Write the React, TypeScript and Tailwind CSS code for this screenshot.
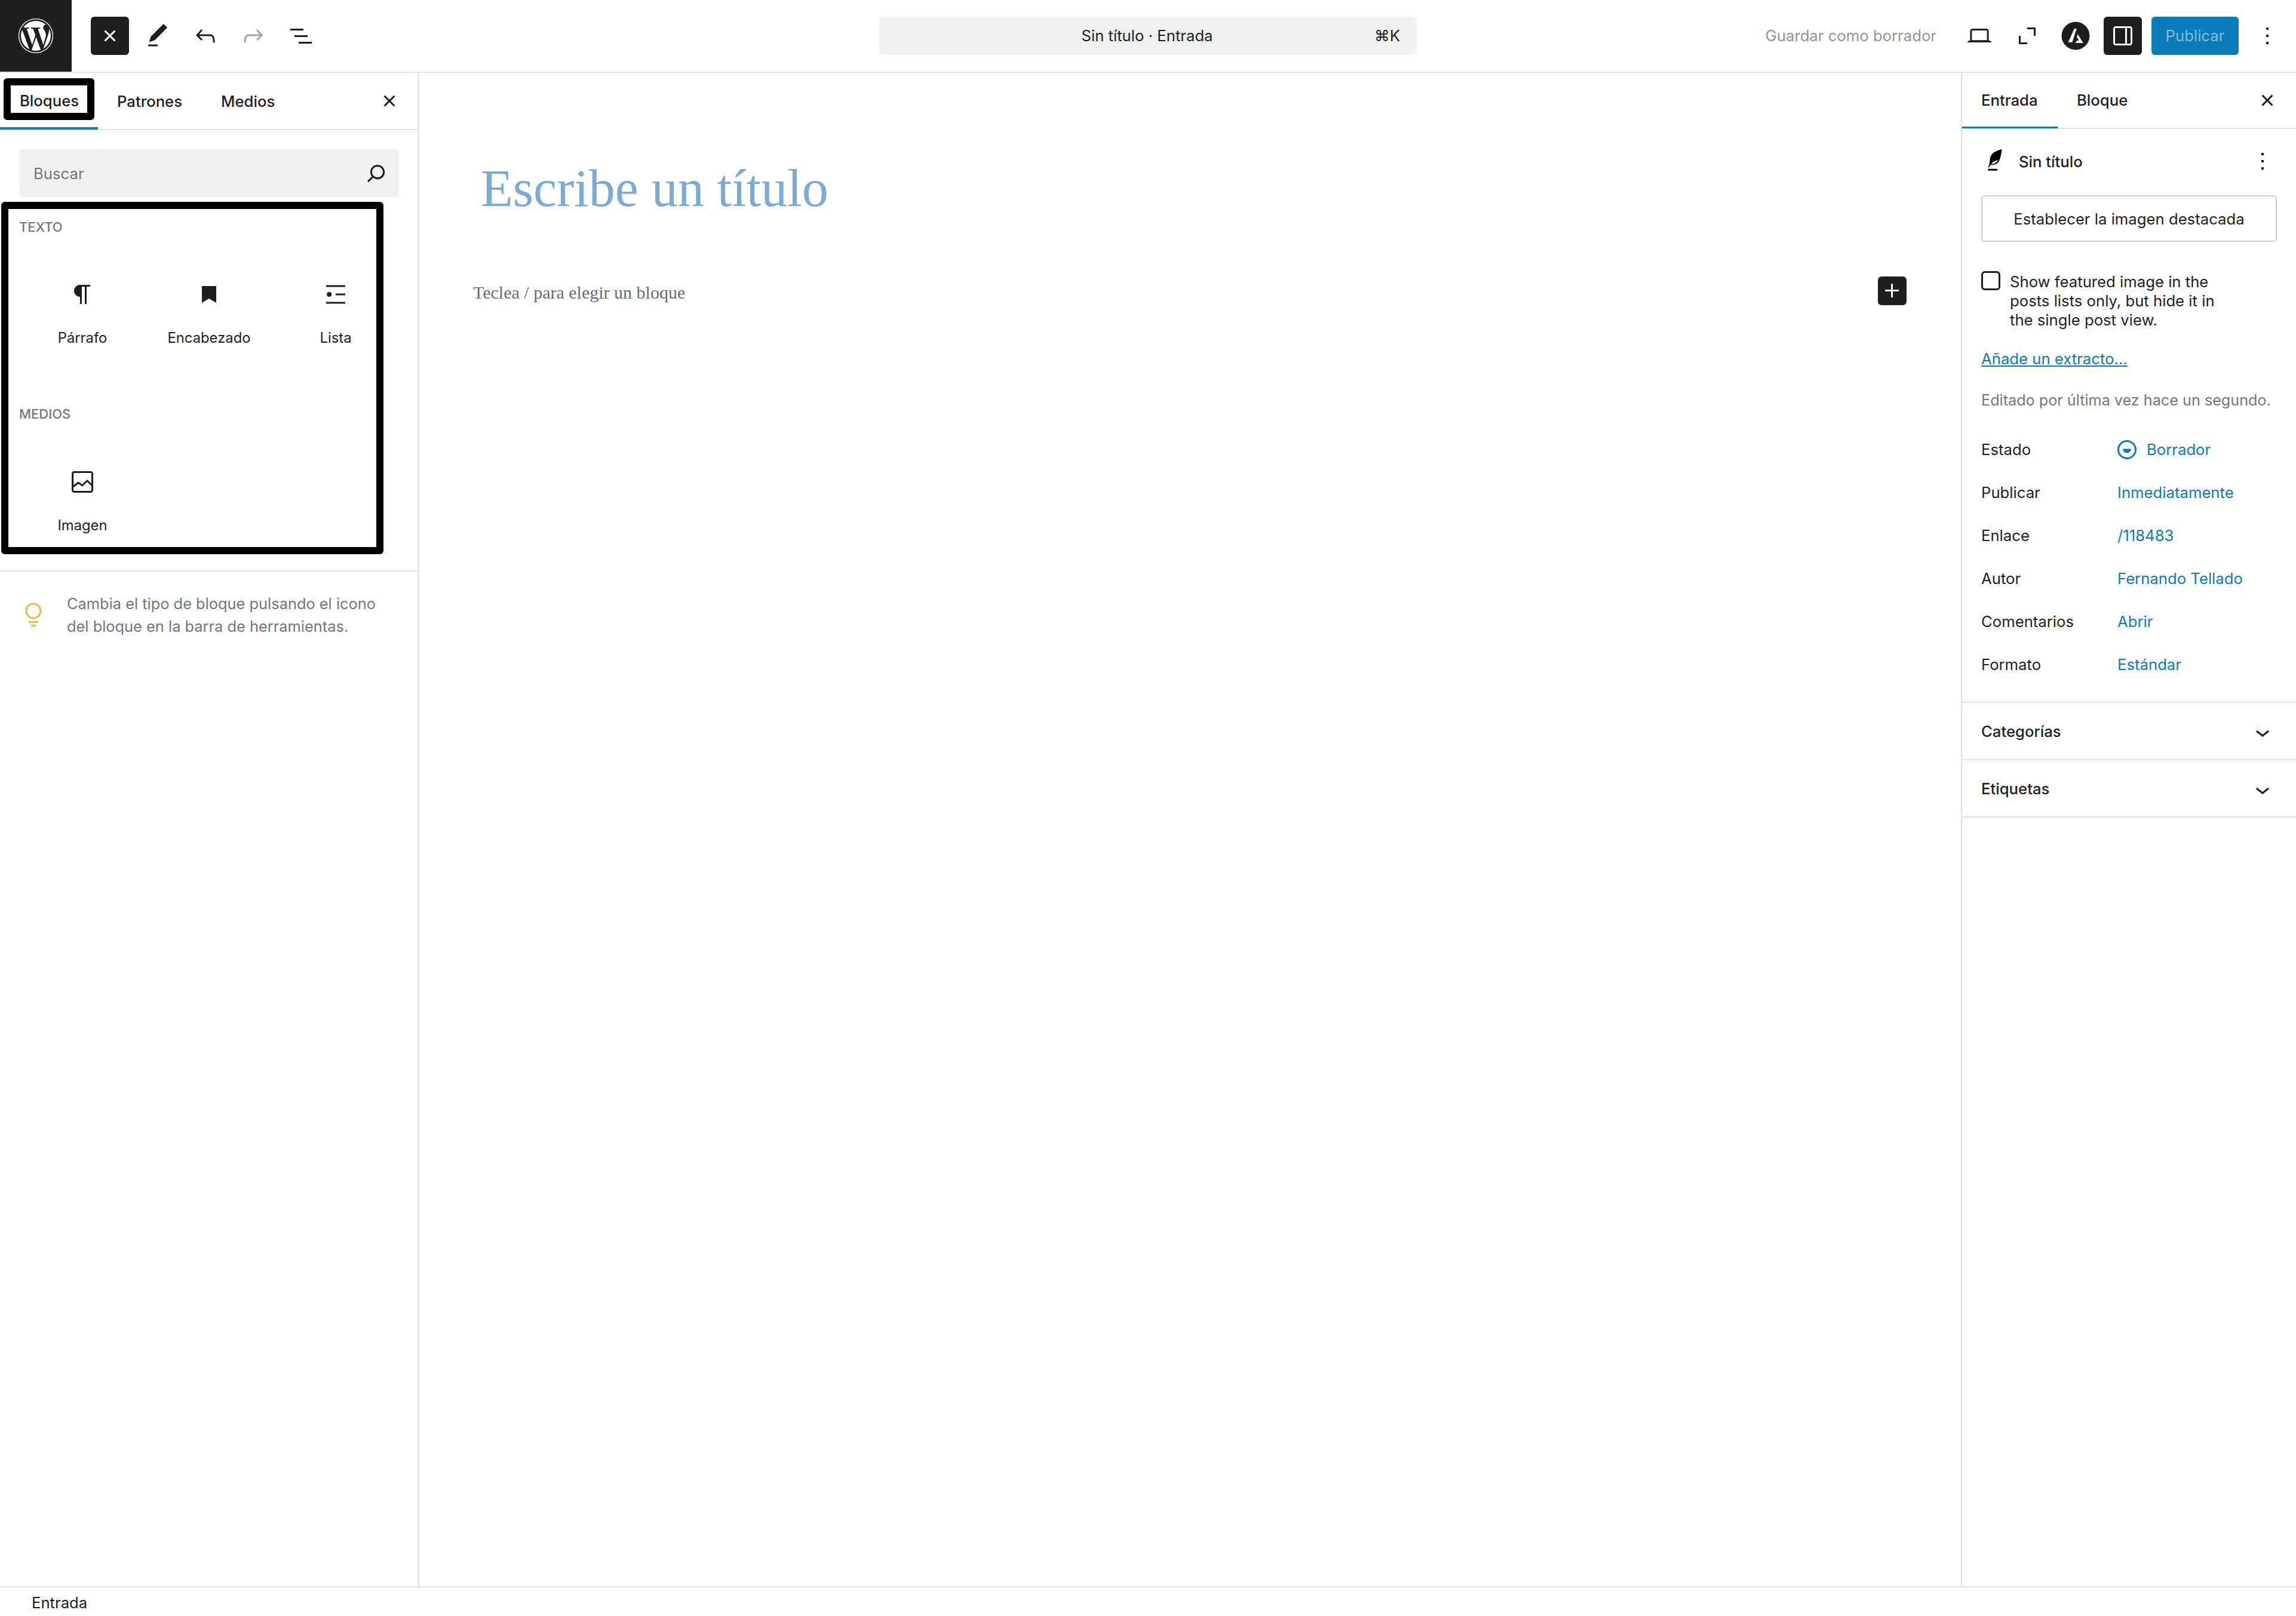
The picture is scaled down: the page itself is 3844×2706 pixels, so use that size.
import type { ReactNode } from 'react'
import { FaWordpress } from 'react-icons/fa'

function Icon({ d, className = 'w-12 h-12 fill-[#1e1e1e]' }: { d: string; className?: string }) {
  return (
    <svg viewBox="0 0 24 24" className={className} aria-hidden="true">
      <path d={d} />
    </svg>
  )
}

const icons = {
  closeSmall: 'M12 13.06l3.712 3.713 1.061-1.06L13.061 12l3.712-3.712-1.06-1.06L12 10.938 8.288 7.227l-1.061 1.06L10.939 12l-3.712 3.712 1.06 1.061L12 13.061z',
  pencil: 'M20.1 5.1L16.9 2 6.2 12.7l-1.3 4.4 4.5-1.3L20.1 5.1zM4 20.8h8v-1.5H4v1.5z',
  undo: 'M18.3 11.7c-.6-.6-1.4-.9-2.3-.9H6.7l2.9-3.3-1.1-1-4.5 5L8.5 16l1-1-2.7-2.7H16c.5 0 .9.2 1.3.5 1 1 1 3.4 1 4.5v.3h1.5v-.2c0-1.5 0-4.3-1.5-5.7z',
  redo: 'M15.6 6.5l-1.1 1 2.9 3.3H8c-.9 0-1.7.3-2.3.9-1.4 1.5-1.4 4.2-1.4 5.6v.2h1.5v-.3c0-1.1 0-3.5 1-4.5.3-.3.7-.5 1.3-.5h9.2L14.5 15l1.1 1.1 4.6-4.6-4.6-5z',
  listView: 'M3 6h11v1.5H3V6Zm3.5 5.5h11V13h-11v-1.5ZM21 17H10v1.5h11V17Z',
  search: 'M13 5c-3.3 0-6 2.7-6 6 0 1.4.5 2.7 1.3 3.7l-3.8 3.8 1.1 1.1 3.8-3.8c1 .8 2.3 1.3 3.7 1.3 3.3 0 6-2.7 6-6S16.3 5 13 5zm0 10.5c-2.5 0-4.5-2-4.5-4.5s2-4.5 4.5-4.5 4.5 2 4.5 4.5-2 4.5-4.5 4.5z',
  paragraph: 'm9.99609 14v-.2251l.00391.0001v6.225h1.5v-14.5h2.5v14.5h1.5v-14.5h3v-1.5h-8.50391c-2.76142 0-5 2.23858-5 5 0 2.7614 2.23858 5 5 5z',
  bookmark: 'M6 5h12v14l-6-3.5L6 19z',
  list: 'M4 4.2h16v1.5H4zM4 18.3h16v1.5H4zM12 11.3h8v1.5h-8zM8.6 12a2 2 0 1 1-4 0 2 2 0 0 1 4 0z',
  image: 'M19 3H5c-1.1 0-2 .9-2 2v14c0 1.1.9 2 2 2h14c1.1 0 2-.9 2-2V5c0-1.1-.9-2-2-2zM5 4.5h14c.3 0 .5.2.5.5v8.4l-3-2.9c-.3-.3-.8-.3-1 0L11.9 14 9 12c-.3-.2-.6-.2-.8 0l-3.6 2.6V5c-.1-.3.1-.5.4-.5zm14 15H5c-.3 0-.5-.2-.5-.5v-2.4l4.1-3 3 1.9c.3.2.7.2.9-.1L16 12l3.5 3.4V19c0 .3-.2.5-.5.5z',
  tip: 'M12 15.8c-3.7 0-6.8-3-6.8-6.8s3-6.8 6.8-6.8c3.7 0 6.8 3 6.8 6.8s-3.1 6.8-6.8 6.8zm0-12C9.1 3.8 6.8 6.1 6.8 9s2.4 5.2 5.2 5.2c2.9 0 5.2-2.4 5.2-5.2S14.9 3.8 12 3.8zM8 17.5h8V19H8zM10 20.5h4V22h-4z',
  desktop: 'M20.5 16h-.7V8c0-1.1-.9-2-2-2H6.2c-1.1 0-2 .9-2 2v8h-.7c-.8 0-1.5.7-1.5 1.5h20c0-.8-.7-1.5-1.5-1.5zM5.7 8c0-.3.2-.5.5-.5h11.6c.3 0 .5.2.5.5v7.6H5.7V8z',
  fullscreen: 'M5 12h1.5v5.5H12V19H5zM12 5h7v7h-1.5V6.5H12z',
  sidebar: 'M18 4H6c-1.1 0-2 .9-2 2v12c0 1.1.9 2 2 2h12c1.1 0 2-.9 2-2V6c0-1.1-.9-2-2-2zm-4 14.5H6c-.3 0-.5-.2-.5-.5V6c0-.3.2-.5.5-.5h8v13zm4.5-.5c0 .3-.2.5-.5.5h-2.5v-13H18c.3 0 .5.2.5.5v12z',
  more: 'M13 19h-2v-2h2v2zm0-6h-2v-2h2v2zm0-6h-2V5h2v2z',
  chevron: 'M17.5 11.6L12 16l-5.5-4.4.9-1.2L12 14l4.5-3.6 1 1.2z',
  plus: 'M11 12.5V17.5H12.5V12.5H17.5V11H12.5V6H11V11H6V12.5H11Z',
}

function BlockItem({ icon, label }: { icon: string; label: string }) {
  return (
    <div className="flex flex-col items-center">
      <Icon d={icon} />
      <span className="mt-[33px] text-[23.8px] leading-8 text-[#1e1e1e]">{label}</span>
    </div>
  )
}

function MetaRow({ label, children }: { label: string; children: ReactNode }) {
  return (
    <div className="flex h-[72px] items-center">
      <span className="w-[228px] text-[#1e1e1e]">{label}</span>
      <span className="flex items-center text-[#0a7ab8]">{children}</span>
    </div>
  )
}

function Collapsed({ label }: { label: string }) {
  return (
    <div className="flex h-[96px] items-center justify-between border-b-2 border-[#e0e0e0] px-8 pt-[3px] font-medium text-[#1e1e1e]">
      <span>{label}</span>
      <Icon d={icons.chevron} />
    </div>
  )
}

export default function App() {
  return (
    <div className="flex h-screen w-screen flex-col overflow-hidden bg-white font-['Inter',sans-serif] text-[25.7px]">
      {/* Top bar */}
      <header className="flex h-[122px] shrink-0 items-start border-b-2 border-[#e0e0e0]">
        <div className="flex h-[120px] w-[120px] items-center justify-center bg-[#1e1e1e]">
          <FaWordpress className="h-[60px] w-[60px] text-white" />
        </div>
        <div className="flex h-[120px] w-[1352px] items-center pl-8">
          <div className="flex h-16 w-16 items-center justify-center rounded-md bg-[#1e1e1e]">
            <Icon d={icons.closeSmall} className="h-12 w-12 fill-white" />
          </div>
          <div className="ml-4 flex w-16 justify-center"><Icon d={icons.pencil} /></div>
          <div className="ml-2 flex w-[80px] justify-center"><Icon d={icons.undo} /></div>
          <div className="flex w-[80px] justify-center"><Icon d={icons.redo} className="h-12 w-12 fill-[#a3a3a3]" /></div>
          <div className="flex w-[80px] justify-center"><Icon d={icons.listView} /></div>
        </div>
        <div className="mt-7 flex h-16 w-[900px] items-center rounded-lg bg-[#f0f0f0] px-7">
          <span className="flex-1 pl-[40px] text-center text-[#1e1e1e]">Sin título · Entrada</span>
          <span className="text-[#1e1e1e]">⌘K</span>
        </div>
        <div className="flex h-[120px] flex-1 items-center justify-end pr-6">
          <span className="mr-12 text-[#949494]">Guardar como borrador</span>
          <Icon d={icons.desktop} />
          <div className="ml-[32px]"><Icon d={icons.fullscreen} /></div>
          <svg viewBox="0 0 48 48" className="ml-[33px] h-12 w-12" aria-hidden="true">
            <circle cx="24" cy="24" r="23.5" fill="#1e1e1e" />
            <path d="M21.7 12h4l-7.4 22.7h-6.6zM27.7 21.3 36.7 36H23.3l3.2-4.2h3.2l-3.6-6.2z" fill="#fff" />
          </svg>
          <div className="ml-[23px] flex h-16 w-16 items-center justify-center rounded-md bg-[#1e1e1e]">
            <Icon d={icons.sidebar} className="h-12 w-12 fill-white" />
          </div>
          <div className="ml-4 flex h-16 w-[146px] items-center justify-center rounded-md bg-[#0a7cba] text-[#86b9dc]">Publicar</div>
          <div className="ml-6"><Icon d={icons.more} /></div>
        </div>
      </header>

      <div className="flex min-h-0 flex-1">
        {/* Block inserter */}
        <aside className="w-[702px] shrink-0 border-r-2 border-[#e0e0e0]">
          <div className="flex h-[96px] items-center border-b-2 border-[#e0e0e0] text-[#1e1e1e]">
            <div className="relative flex h-[96px] w-[164px] items-center border-b-[4px] border-[#0a7cba] pl-[33px] pt-1 font-medium">
              Bloques
              <div className="absolute left-[6px] top-[10px] h-[70px] w-[152px] rounded-md border-[12px] border-black" />
            </div>
            <span className="px-8 pt-[2px] font-medium">Patrones</span>
            <span className="ml-[33px] pt-[2px] font-medium">Medios</span>
            <div className="ml-auto mr-6"><Icon d={icons.closeSmall} /></div>
          </div>
          <div className="mx-8 mt-8 flex h-20 items-center justify-between rounded-md bg-[#f0f0f0] pl-6 pr-[14px] text-[#757575]">
            <span className="pt-[2px]">Buscar</span>
            <Icon d={icons.search} />
          </div>
          <div className="ml-[2px] mt-2 h-[590px] w-[640px] rounded-md border-[12px] border-black pl-[18px] pt-4">
            <div className="h-7 text-[22px] font-medium uppercase leading-7 text-[#757575]">Texto</div>
            <div className="mt-[75px] grid w-[636px] grid-cols-3">
              <BlockItem icon={icons.paragraph} label="Párrafo" />
              <BlockItem icon={icons.bookmark} label="Encabezado" />
              <BlockItem icon={icons.list} label="Lista" />
            </div>
            <div className="mt-[97px] h-7 text-[22px] font-medium uppercase leading-7 text-[#757575]">Medios</div>
            <div className="mt-[76px] grid w-[636px] grid-cols-3">
              <BlockItem icon={icons.image} label="Imagen" />
            </div>
          </div>
          <div className="mt-[27px] flex items-center gap-8 border-t-2 border-[#e0e0e0] pl-8 pt-[33px]">
            <Icon d={icons.tip} className="h-12 w-12 fill-[#f0b849]" />
            <p className="w-[540px] pt-[2px] text-[25.4px] leading-[38px] text-[#757575]">
              Cambia el tipo de bloque pulsando el icono del bloque en la barra de herramientas.
            </p>
          </div>
        </aside>

        {/* Canvas */}
        <main className="min-w-0 flex-1 font-['Liberation_Serif',serif]">
          <h1 className="pl-[103px] pt-[144px] text-[88px] font-normal leading-[100px] text-[#7aaad8]">Escribe un título</h1>
          <div className="mt-[97px] flex items-center justify-between pl-[90px] pr-[91px]">
            <span className="pt-[6px] text-[30px] leading-none text-[#6b6b6b]">Teclea / para elegir un bloque</span>
            <div className="flex h-12 w-12 items-center justify-center rounded-md bg-[#1e1e1e]">
              <Icon d={icons.plus} className="h-12 w-12 fill-white" />
            </div>
          </div>
        </main>

        {/* Settings sidebar */}
        <aside className="w-[561px] shrink-0 border-l-2 border-[#e0e0e0]">
          <div className="flex h-[94px] items-center border-b-2 border-[#e0e0e0] text-[#1e1e1e]">
            <div className="flex h-[94px] w-[160px] items-center border-b-[3px] border-[#0a7cba] pl-8 pt-1 font-medium">Entrada</div>
            <span className="pl-8 font-medium">Bloque</span>
            <div className="ml-auto mr-6"><Icon d={icons.closeSmall} /></div>
          </div>
          <div className="px-8">
            <div className="mt-[30px] flex h-12 items-center text-[#1e1e1e]">
              <svg viewBox="0 0 24 24" className="-ml-[1px] h-12 w-12" aria-hidden="true">
                <path d="M17.85 2C13 3 8.5 5 7.85 10.35 7.6 12.5 7.2 15 6.3 16.8l.7.3 1.2-2.1C11 15.6 14.8 14.5 16 10.5 17 7.5 17.5 4.5 17.85 2z" fill="#000" />
                <path d="M8.9 14.3C10.5 12.3 12.5 11.5 14.6 11 13.5 13.2 11.2 14.6 8.9 14.3z" fill="#fff" />
                <path d="M6.15 18.35H14v1.5H6.15z" fill="#000" />
              </svg>
              <span className="ml-4 pt-[3px] font-medium">Sin título</span>
              <div className="ml-auto"><Icon d={icons.more} /></div>
            </div>
            <div className="mt-[33px] flex h-[78px] items-center justify-center rounded-md border-2 border-[#cccccc] pt-[2px] text-[#1e1e1e]">
              Establecer la imagen destacada
            </div>
            <div className="mt-[49px] flex items-start">
              <div className="h-8 w-8 shrink-0 rounded-md border-[3px] border-[#1e1e1e]" />
              <p className="ml-4 mt-[2px] w-[370px] leading-8 text-[#1e1e1e]">
                Show featured image in the posts lists only, but hide it in the single post view.
              </p>
            </div>
            <div className="mt-[33px] leading-8 text-[#0a7ab8] underline">Añade un extracto...</div>
            <div className="mt-[37px] whitespace-nowrap text-[25.2px] leading-8 text-[#757575]">Editado por última vez hace un segundo.</div>
            <div className="mt-[31px]">
              <MetaRow label="Estado">
                <svg viewBox="0 0 32 32" className="h-8 w-8" aria-hidden="true">
                  <circle cx="16" cy="16" r="14.5" fill="none" stroke="#0a7ab8" strokeWidth="3" />
                  <path d="M9 14.5h14a7 7 0 0 1-14 0z" fill="#0a7ab8" />
                </svg>
                <span className="ml-[17px]">Borrador</span>
              </MetaRow>
              <MetaRow label="Publicar">Inmediatamente</MetaRow>
              <MetaRow label="Enlace">/118483</MetaRow>
              <MetaRow label="Autor">Fernando Tellado</MetaRow>
              <MetaRow label="Comentarios">Abrir</MetaRow>
              <MetaRow label="Formato">Estándar</MetaRow>
            </div>
          </div>
          <div className="mt-[26px] border-t-2 border-[#e0e0e0]">
            <Collapsed label="Categorías" />
            <Collapsed label="Etiquetas" />
          </div>
        </aside>
      </div>

      <footer className="flex h-[50px] shrink-0 items-center border-t-2 border-[#e0e0e0] pl-[53px] pt-1 text-[#1e1e1e]">Entrada</footer>
    </div>
  )
}
